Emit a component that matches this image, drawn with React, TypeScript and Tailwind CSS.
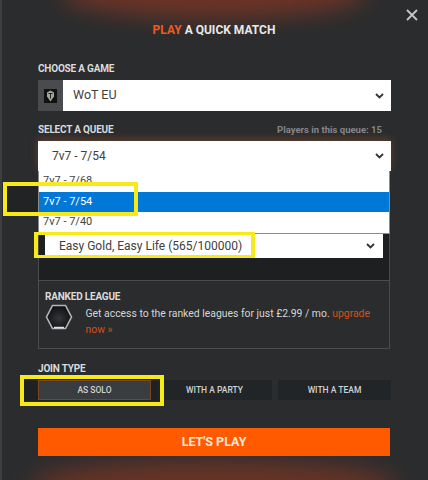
import React from "react";

const Chevron = () => (
  <svg width="9" height="6" viewBox="0 0 9 6" fill="none" stroke="#333" strokeWidth="1.8">
    <path d="M1 1l3.5 3.5L8 1" />
  </svg>
);

const Label = ({ children }: { children: React.ReactNode }) => (
  <div className="text-[10px] font-bold leading-[12px] tracking-[-0.2px] text-[#d9dbdc]">{children}</div>
);

export default function App() {
  return (
    <div className="relative flex h-[480px] w-[428px] flex-col overflow-hidden bg-[#2a2c2e] px-[38px] font-['Roboto',sans-serif]">
      {/* glows */}
      <div className="pointer-events-none absolute left-[60px] top-[-32px] h-[50px] w-[308px] rounded-[50%] bg-[#9c3a20] opacity-60 blur-[12px]" />
      <div className="pointer-events-none absolute bottom-[-30px] left-[30px] h-[50px] w-[368px] rounded-[50%] bg-[#9c3a20] opacity-55 blur-[12px]" />
      <div className="pointer-events-none absolute inset-y-0 left-0 w-[2px] bg-[#3c3e40]" />
      <div className="pointer-events-none absolute left-[7px] top-[186px] h-[26px] w-[31px] bg-[#222325]" />
      <div className="pointer-events-none absolute left-[24px] top-[379px] h-[22px] w-[136px] bg-[#1f2123]" />

      {/* title */}
      <div className="relative mt-[23px] text-center text-[12px] font-bold leading-[15px] text-[#e8e8e8]">
        <span className="text-[#f0591f]">PLAY</span> A QUICK MATCH
      </div>
      <button className="absolute right-[9px] top-[8px] text-[#c4c6c8]">
        <svg width="14" height="14" viewBox="0 0 14 14" fill="none" stroke="currentColor" strokeWidth="1.8">
          <path d="M2 2l10 10M12 2L2 12" />
        </svg>
      </button>

      {/* game */}
      <div className="relative mt-[25px]">
        <Label>CHOOSE A GAME</Label>
      </div>
      <div className="relative mt-[5px] flex h-[31px] w-[353px]">
        <div className="flex w-[25px] items-center justify-center bg-[#4a4b4d]">
          <svg width="13" height="14" viewBox="0 0 13 14">
            <rect width="13" height="14" fill="#111" />
            <path d="M6.500 1.500l3.500 2v4l-3.500 5-3.500-5v-4z" fill="#a5a5a0" />
            <path d="M4.500 4.500h4M6.500 4.500v5" stroke="#222" strokeWidth="1" />
          </svg>
        </div>
        <div className="flex flex-1 items-center justify-between bg-white pl-[10px] pr-[7px] text-[12.5px] text-[#404040]">
          <span>WoT EU</span>
          <Chevron />
        </div>
      </div>

      {/* queue */}
      <div className="relative mt-[13px] flex items-center justify-between pr-[8px]">
        <Label>SELECT A QUEUE</Label>
        <span className="text-[9.5px] font-bold leading-[12px] text-[#85878a]">Players in this queue: 15</span>
      </div>
      <div className="relative mt-[5px] flex h-[30px] w-[353px] items-center justify-between bg-white pl-[14px] pr-[7px] text-[12px] text-[#404040] shadow-[0_-2px_8px_rgba(200,100,40,0.35)]">
        <span>7v7 - 7/54</span>
        <Chevron />
        {/* open dropdown list */}
        <div className="absolute left-0 top-[30px] z-10 flex w-[352px] flex-col border border-t-0 border-[#8c8c8c] bg-white text-[11px] leading-[20.5px] text-[#444]">
          <div className="pl-[4px]">7v7 - 7/68</div>
          <div className="bg-[#0078d7] pl-[4px] text-white">7v7 - 7/54</div>
          <div className="pl-[4px]">7v7 - 7/40</div>
        </div>
      </div>

      {/* ranked panel */}
      <div className="relative mt-[62px] flex w-[352px] flex-col border border-t-0 border-[#4a4c4e]">
        <div className="flex h-[47px] flex-col bg-[#1e1f21]">
          <div className="ml-[6px] flex h-[25px] w-[338px] items-center justify-between bg-white pl-[14px] pr-[8px] text-[12px] text-[#404040]">
            <span>Easy Gold, Easy Life (565/100000)</span>
            <Chevron />
          </div>
        </div>
        <div className="h-[68px] border-t border-[#4a4c4e] px-[6px] pt-[10px]">
          <Label>RANKED LEAGUE</Label>
          <div className="mt-[1px] flex">
            <svg width="28" height="26" viewBox="0 0 28 26" className="shrink-0">
              <defs>
                <radialGradient id="hex" cx="50%" cy="55%" r="55%">
                  <stop offset="0%" stopColor="#34363a" />
                  <stop offset="100%" stopColor="#0d0e10" />
                </radialGradient>
              </defs>
              <path d="M7.500 1.500h13L26.500 13l-6 11.500h-13L1.500 13z" fill="url(#hex)" stroke="#b4b6b8" strokeWidth="1.6" />
              <path d="M9 23.500h10" stroke="#e0e0e0" strokeWidth="1.500" />
            </svg>
            <p className="ml-[12.500px] mt-[2px] text-[10.4px] leading-[16px] text-[#d5d6d8]">
              Get access to the ranked leagues for just £2.99 / mo.{" "}
              <span className="text-[#d5501c]">upgrade now »</span>
            </p>
          </div>
        </div>
      </div>

      {/* join type */}
      <div className="relative mt-[14px]">
        <Label>JOIN TYPE</Label>
      </div>
      <div className="relative mt-[5px] grid h-[20px] w-[353px] grid-cols-[113px_114px_113px] gap-x-[6.500px] text-[8.5px] font-medium text-[#d0d2d3]">
        <div className="flex items-center justify-center border border-[#7a4526] bg-[#3a3d40]">AS SOLO</div>
        <div className="flex items-center justify-center bg-[#222527]">WITH A PARTY</div>
        <div className="flex items-center justify-center bg-[#222527]">WITH A TEAM</div>
      </div>

      {/* submit */}
      <button className="relative mt-[28px] h-[28px] w-[352px] bg-[#ff5a00] text-[12.5px] font-bold text-[#fbe6d8]">
        LET'S PLAY
      </button>

      {/* yellow annotation frames */}
      <div className="pointer-events-none absolute left-[3px] top-[182px] z-20 h-[34px] w-[135px] border-[4px] border-[#f6ea1a]" />
      <div className="pointer-events-none absolute left-[34px] top-[232px] z-20 h-[26px] w-[221px] border-x-[4px] border-y-[3px] border-[#f6ea1a]" />
      <div className="pointer-events-none absolute left-[20px] top-[375px] z-20 h-[31px] w-[144px] border-[4px] border-[#f6ea1a]" />
    </div>
  );
}
